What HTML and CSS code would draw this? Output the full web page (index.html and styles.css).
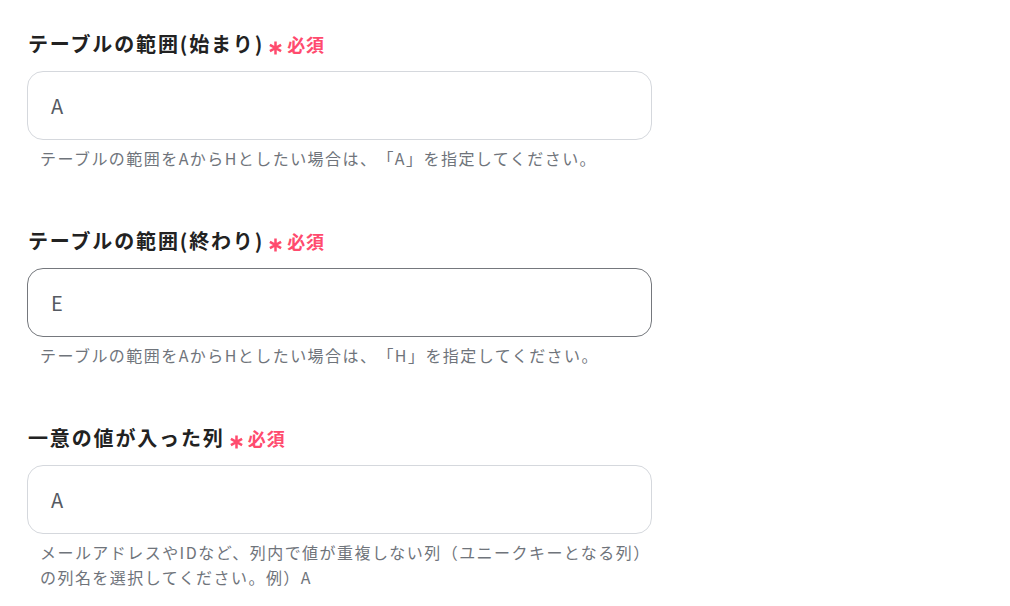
FILE: index.html
```html
<!DOCTYPE html>
<html lang="ja">
<head>
<meta charset="utf-8">
<link rel="stylesheet" href="styles.css">
</head>
<body>
<div class="form">
  <div class="field">
    <div class="label">テーブルの範囲(始まり)<span class="req"><svg class="ast" viewBox="0 0 13 14" width="13" height="14"><path d="M6.5 0.5V13.5M0.9 3.8L12.1 10.2M12.1 3.8L0.9 10.2"/></svg>必須</span></div>
    <div class="input">A</div>
    <div class="help">テーブルの範囲をAからHとしたい場合は、「A」を指定してください。</div>
  </div>
  <div class="field">
    <div class="label">テーブルの範囲(終わり)<span class="req"><svg class="ast" viewBox="0 0 13 14" width="13" height="14"><path d="M6.5 0.5V13.5M0.9 3.8L12.1 10.2M12.1 3.8L0.9 10.2"/></svg>必須</span></div>
    <div class="input active">E</div>
    <div class="help">テーブルの範囲をAからHとしたい場合は、「H」を指定してください。</div>
  </div>
  <div class="field">
    <div class="label">一意の値が入った列<span class="req"><svg class="ast" viewBox="0 0 13 14" width="13" height="14"><path d="M6.5 0.5V13.5M0.9 3.8L12.1 10.2M12.1 3.8L0.9 10.2"/></svg>必須</span></div>
    <div class="input">A</div>
    <div class="help">メールアドレスやIDなど、列内で値が重複しない列（ユニークキーとなる列）の列名を選択してください。例）A</div>
  </div>
</div>
</body>
</html>
```
FILE: styles.css
```css
html, body {
  margin: 0;
  padding: 0;
  background: #ffffff;
}
body {
  font-family: "Noto Sans CJK JP", "Noto Sans", sans-serif;
  color: #222222;
}
.form {
  width: 625px;
  padding: 29px 0 0 27px;
  display: flex;
  flex-direction: column;
  gap: 55px;
}
.field {
  display: flex;
  flex-direction: column;
}
.label {
  font-size: 20px;
  line-height: 30px;
  font-weight: 700;
  letter-spacing: 1.85px;
  padding-left: 1px;
  color: #222222;
  display: flex;
  align-items: center;
}
.req {
  color: #ff4b6e;
  font-size: 18px;
  font-weight: 700;
  letter-spacing: 1px;
  margin-left: 5px;
  display: inline-flex;
  align-items: center;
}
.ast {
  display: block;
  margin: 7px 5px 0 0;
  stroke: #ff4b6e;
  stroke-width: 2.5;
  fill: none;
}
.input {
  margin-top: 12px;
  height: 67px;
  border: 1px solid #d5d8dd;
  border-radius: 16px;
  box-sizing: content-box;
  padding: 0 0 0 23px;
  display: flex;
  align-items: center;
  font-size: 20px;
  color: #555a62;
  width: 600px;
}
.input.active {
  border-color: #75787d;
}
.help {
  margin-top: 6px;
  padding-left: 13px;
  margin-right: -12px;
  font-size: 16px;
  line-height: 25px;
  letter-spacing: 1.45px;
  color: #6f747b;
  text-spacing-trim: space-all;
}
```
